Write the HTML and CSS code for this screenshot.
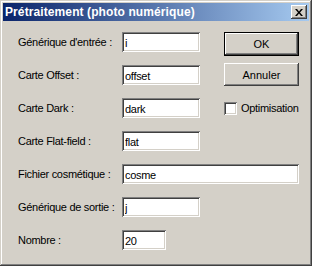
FILE: index.html
```html
<!DOCTYPE html>
<html lang="fr">
<head>
    <meta charset="UTF-8">
    <title>Prétraitement (photo numérique)</title>
    <link rel="stylesheet" href="styles.css">
</head>
<body>
    <div class="window">
        <div class="titlebar">
            <span class="title">Prétraitement (photo numérique)</span>
            <button class="close-btn" title="Fermer">
                <svg width="8" height="7" viewBox="0 0 8 7">
                    <path d="M0 0h2l2 2.5 2-2.5h2l-3 3.5 3 3.5h-2l-2-2.5-2 2.5h-2l3-3.5z" fill="#000"/>
                </svg>
            </button>
        </div>

        <div class="dialog">
            <label class="lbl" for="gen-in">Générique d'entrée :</label>
            <input class="field" id="gen-in" type="text" value="i">
            <button class="btn default">OK</button>

            <label class="lbl" for="offset">Carte Offset :</label>
            <input class="field" id="offset" type="text" value="offset">
            <button class="btn cancel">Annuler</button>

            <label class="lbl" for="dark">Carte Dark :</label>
            <input class="field" id="dark" type="text" value="dark">
            <label class="check">
                <span class="box"></span>
                <span>Optimisation</span>
            </label>

            <label class="lbl" for="flat">Carte Flat-field :</label>
            <input class="field" id="flat" type="text" value="flat">

            <label class="lbl" for="cosme">Fichier cosmétique :</label>
            <input class="field wide" id="cosme" type="text" value="cosme">

            <label class="lbl" for="gen-out">Générique de sortie :</label>
            <input class="field" id="gen-out" type="text" value="j">

            <label class="lbl" for="nombre">Nombre :</label>
            <input class="field short" id="nombre" type="text" value="20">
        </div>
    </div>
</body>
</html>
```

FILE: styles.css
```css
* {
    box-sizing: border-box;
}
body {
    margin: 0;
    background-color: #d4d0c8;
    font-family: 'Liberation Sans', Arial, sans-serif;
    font-size: 11px;
    color: #000;
}
.window {
    width: 312px;
    height: 266px;
    padding: 3px;
    background-color: #d4d0c8;
    box-shadow: inset -1px -1px #404040, inset 1px 1px #d4d0c8,
                inset -2px -2px #808080, inset 2px 2px #fff;
}
.titlebar {
    height: 18px;
    display: flex;
    align-items: center;
    justify-content: space-between;
    padding: 0 2px 0 2px;
    background: linear-gradient(to right, #0a246a, #a6caf0);
}
.title {
    color: #fff;
    font-weight: bold;
    font-size: 12px;
    letter-spacing: 0.1px;
}
.close-btn {
    width: 16px;
    height: 14px;
    padding: 0;
    border: none;
    background-color: #d4d0c8;
    display: flex;
    align-items: center;
    justify-content: center;
    box-shadow: inset -1px -1px #404040, inset 1px 1px #fff,
                inset -2px -2px #808080;
}
.dialog {
    display: grid;
    grid-template-columns: 104px 102px 75px;
    grid-auto-rows: 20px;
    row-gap: 13px;
    padding: 11px 0 0 15px;
    letter-spacing: -0.3px;
}
.lbl {
    grid-column: 1;
    align-self: center;
    white-space: nowrap;
}
.field {
    width: 78px;
    height: 20px;
    margin: 0;
    padding: 1px 3px 0;
    border: none;
    background-color: #fff;
    font-family: inherit;
    font-size: 11px;
    letter-spacing: -0.3px;
    outline: none;
    box-shadow: inset 1px 1px #808080, inset -1px -1px #fff,
                inset 2px 2px #404040, inset -2px -2px #d4d0c8;
}
.wide {
    grid-column: 2 / 4;
    width: 177px;
}
.short {
    width: 44px;
}
.btn {
    width: 75px;
    margin: 0;
    padding: 0;
    border: none;
    background-color: #d4d0c8;
    font-family: inherit;
    font-size: 11px;
    color: #000;
}
.default {
    align-self: start;
    height: 24px;
    box-shadow: inset 1px 1px #000, inset -1px -1px #000,
                inset -2px -2px #404040, inset 2px 2px #fff,
                inset -3px -3px #808080;
}
.cancel {
    align-self: end;
    height: 23px;
    margin-bottom: -1px;
    box-shadow: inset -1px -1px #404040, inset 1px 1px #fff,
                inset -2px -2px #808080;
}
.check {
    align-self: center;
    display: flex;
    align-items: center;
    gap: 4px;
    white-space: nowrap;
}
.box {
    width: 13px;
    height: 13px;
    background-color: #fff;
    box-shadow: inset 1px 1px #808080, inset -1px -1px #fff,
                inset 2px 2px #404040, inset -2px -2px #d4d0c8;
}
```
